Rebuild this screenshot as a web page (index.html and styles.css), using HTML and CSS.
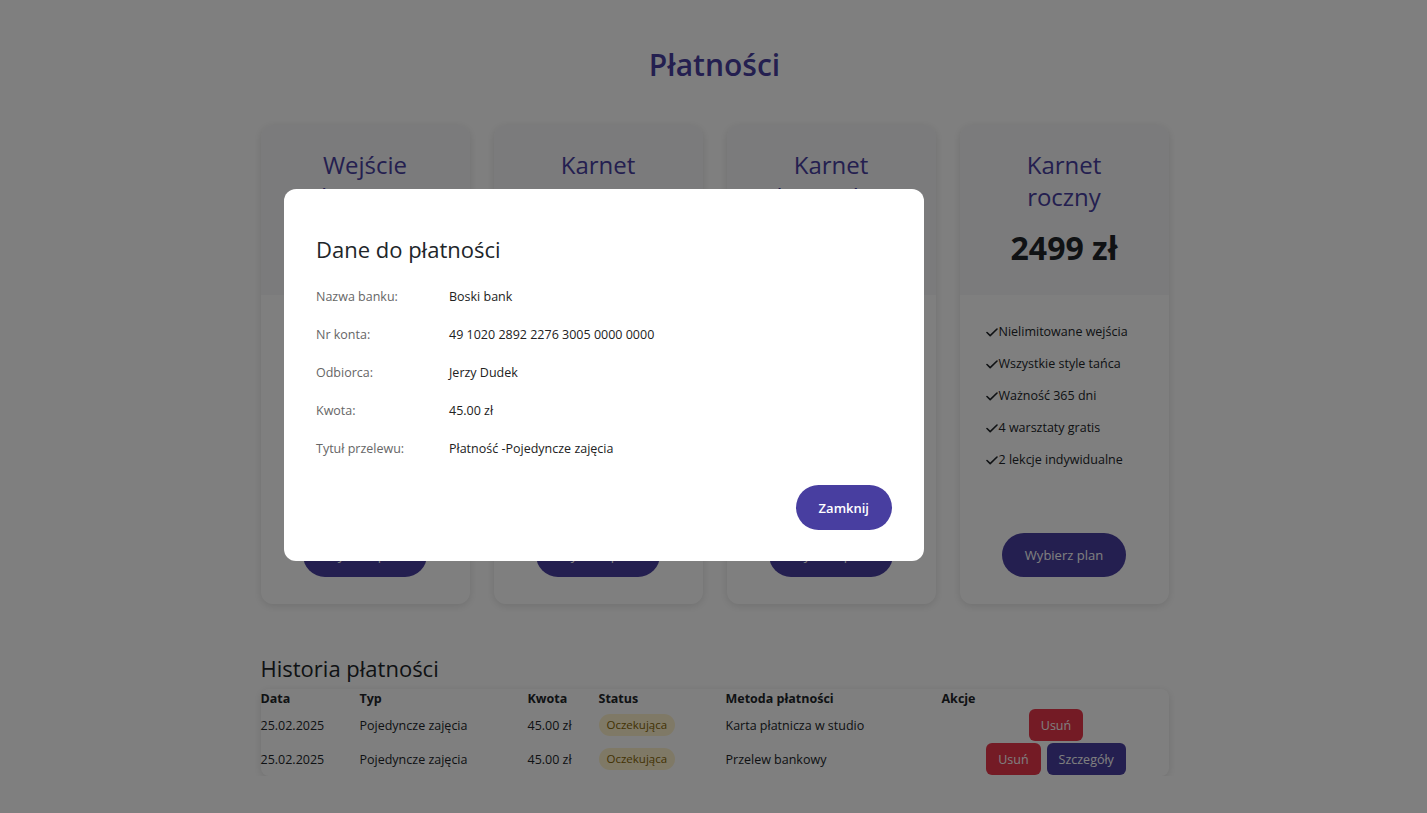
FILE: index.html
```html
<!DOCTYPE html>
<html lang="pl">
<head>
<meta charset="utf-8">
<title>Płatności</title>
<link rel="stylesheet" href="styles.css">
</head>
<body>
<main class="page">
  <h1 class="page-title">Płatności</h1>
  <section class="plans">
    <div class="plan">
      <div class="plan-head">
        <h3 class="plan-name">Wejście jednorazowe</h3>
        <div class="plan-price">45 zł</div>
      </div>
      <div class="plan-body">
        <ul class="features">
          <li><svg class="check" viewBox="0 0 12 9"><polyline points="1,4.5 4.2,7.6 11,1"/></svg>Jedne zajęcia</li>
          <li><svg class="check" viewBox="0 0 12 9"><polyline points="1,4.5 4.2,7.6 11,1"/></svg>Dowolny styl tańca</li>
        </ul>
        <button class="btn-plan">Wybierz plan</button>
      </div>
    </div>
    <div class="plan">
      <div class="plan-head">
        <h3 class="plan-name">Karnet miesięczny</h3>
        <div class="plan-price">249 zł</div>
      </div>
      <div class="plan-body">
        <ul class="features">
          <li><svg class="check" viewBox="0 0 12 9"><polyline points="1,4.5 4.2,7.6 11,1"/></svg>8 wejść</li>
          <li><svg class="check" viewBox="0 0 12 9"><polyline points="1,4.5 4.2,7.6 11,1"/></svg>Wszystkie style tańca</li>
          <li><svg class="check" viewBox="0 0 12 9"><polyline points="1,4.5 4.2,7.6 11,1"/></svg>Ważność 30 dni</li>
        </ul>
        <button class="btn-plan">Wybierz plan</button>
      </div>
    </div>
    <div class="plan">
      <div class="plan-head">
        <h3 class="plan-name">Karnet kwartalny</h3>
        <div class="plan-price">699 zł</div>
      </div>
      <div class="plan-body">
        <ul class="features">
          <li><svg class="check" viewBox="0 0 12 9"><polyline points="1,4.5 4.2,7.6 11,1"/></svg>Nielimitowane wejścia</li>
          <li><svg class="check" viewBox="0 0 12 9"><polyline points="1,4.5 4.2,7.6 11,1"/></svg>Wszystkie style tańca</li>
          <li><svg class="check" viewBox="0 0 12 9"><polyline points="1,4.5 4.2,7.6 11,1"/></svg>Ważność 90 dni</li>
          <li><svg class="check" viewBox="0 0 12 9"><polyline points="1,4.5 4.2,7.6 11,1"/></svg>1 warsztat gratis</li>
        </ul>
        <button class="btn-plan">Wybierz plan</button>
      </div>
    </div>
    <div class="plan">
      <div class="plan-head">
        <h3 class="plan-name">Karnet roczny</h3>
        <div class="plan-price">2499 zł</div>
      </div>
      <div class="plan-body">
        <ul class="features">
          <li><svg class="check" viewBox="0 0 12 9"><polyline points="1,4.5 4.2,7.6 11,1"/></svg>Nielimitowane wejścia</li>
          <li><svg class="check" viewBox="0 0 12 9"><polyline points="1,4.5 4.2,7.6 11,1"/></svg>Wszystkie style tańca</li>
          <li><svg class="check" viewBox="0 0 12 9"><polyline points="1,4.5 4.2,7.6 11,1"/></svg>Ważność 365 dni</li>
          <li><svg class="check" viewBox="0 0 12 9"><polyline points="1,4.5 4.2,7.6 11,1"/></svg>4 warsztaty gratis</li>
          <li><svg class="check" viewBox="0 0 12 9"><polyline points="1,4.5 4.2,7.6 11,1"/></svg>2 lekcje indywidualne</li>
        </ul>
        <button class="btn-plan">Wybierz plan</button>
      </div>
    </div>
  </section>

  <section class="history">
    <h2 class="history-title">Historia płatności</h2>
    <div class="table-card">
      <table class="history-table">
        <colgroup>
          <col class="c-date"><col class="c-type"><col class="c-amount"><col class="c-status"><col class="c-method"><col class="c-actions">
        </colgroup>
        <thead>
          <tr><th>Data</th><th>Typ</th><th>Kwota</th><th>Status</th><th>Metoda płatności</th><th>Akcje</th></tr>
        </thead>
        <tbody>
          <tr>
            <td>25.02.2025</td><td>Pojedyncze zajęcia</td><td>45.00 zł</td>
            <td><span class="badge">Oczekująca</span></td>
            <td>Karta płatnicza w studio</td>
            <td class="actions"><button class="btn-sm btn-danger">Usuń</button></td>
          </tr>
          <tr>
            <td>25.02.2025</td><td>Pojedyncze zajęcia</td><td>45.00 zł</td>
            <td><span class="badge">Oczekująca</span></td>
            <td>Przelew bankowy</td>
            <td class="actions"><button class="btn-sm btn-danger">Usuń</button><button class="btn-sm btn-primary">Szczegóły</button></td>
          </tr>
        </tbody>
      </table>
    </div>
  </section>
</main>

<div class="overlay">
  <div class="modal">
    <h2 class="modal-title">Dane do płatności</h2>
    <dl class="details">
      <div class="row"><dt>Nazwa banku:</dt><dd>Boski bank</dd></div>
      <div class="row"><dt>Nr konta:</dt><dd>49 1020 2892 2276 3005 0000 0000</dd></div>
      <div class="row"><dt>Odbiorca:</dt><dd>Jerzy Dudek</dd></div>
      <div class="row"><dt>Kwota:</dt><dd>45.00 zł</dd></div>
      <div class="row"><dt>Tytuł przelewu:</dt><dd>Płatność -Pojedyncze zajęcia</dd></div>
    </dl>
    <div class="modal-foot">
      <button class="btn-close">Zamknij</button>
    </div>
  </div>
</div>
</body>
</html>
```

FILE: styles.css
```css
* { box-sizing: border-box; }
html, body { margin: 0; padding: 0; }
body {
  background: #ffffff;
  font-family: "Open Sans", "Noto Sans", sans-serif;
  color: #212529;
}
.page {
  width: 910px;
  margin: 0 auto;
  padding-top: 45px;
  padding-left: 2px;
}
.page-title {
  margin: 0 0 40px;
  text-align: center;
  font-size: 30px;
  line-height: 40px;
  font-weight: 600;
  color: #483ea0;
}
.plans {
  display: grid;
  grid-template-columns: repeat(4, 1fr);
  gap: 24px;
}
.plan {
  background: #fff;
  border-radius: 12px;
  box-shadow: 0 2px 8px rgba(0,0,0,0.12);
  display: flex;
  flex-direction: column;
  overflow: hidden;
}
.plan-head {
  background: #f6f6f8;
  padding: 24px 32px 28px;
  text-align: center;
}
.plan-name {
  margin: 0;
  font-size: 24px;
  line-height: 32px;
  font-weight: 500;
  color: #483ea0;
}
.plan-price {
  margin-top: 16px;
  font-size: 32px;
  line-height: 38px;
  font-weight: 700;
  color: #212529;
}
.plan-body {
  flex: 1;
  display: flex;
  flex-direction: column;
  align-items: center;
  padding: 21px 24px 27px;
}
.features {
  list-style: none;
  margin: 0 0 57px;
  padding: 0 0 0 2px;
  align-self: stretch;
}
.features li {
  display: flex;
  align-items: center;
  font-size: 12.5px;
  line-height: 32px;
  color: #212529;
}
.check {
  width: 12px;
  height: 9px;
  margin-right: 1px;
  fill: none;
  stroke: #212529;
  stroke-width: 1.6;
  stroke-linecap: round;
  stroke-linejoin: round;
}
.btn-plan {
  margin-top: auto;
  height: 44px;
  padding: 0 23px;
  border: none;
  border-radius: 22px;
  background: #483ea0;
  color: #fff;
  font-family: inherit;
  font-size: 13px;
}
.history { margin-top: 48px; }
.history-title {
  margin: 0;
  font-size: 22px;
  line-height: 32px;
  font-weight: 500;
  color: #212529;
}
.table-card {
  margin-top: 5px;
  background: #fff;
  border-radius: 8px;
  box-shadow: 0 2px 8px rgba(0,0,0,0.12);
}
.history-table {
  width: 100%;
  border-collapse: collapse;
  table-layout: fixed;
  font-size: 12.5px;
}
.c-date { width: 99px; }
.c-type { width: 168px; }
.c-amount { width: 71px; }
.c-status { width: 127px; }
.c-method { width: 216px; }
.c-actions { width: 229px; }
.history-table th {
  text-align: left;
  font-weight: 700;
  padding: 0;
  height: 19px;
  line-height: 19px;
}
.history-table td {
  padding: 1px 0;
  height: 34px;
  vertical-align: middle;
}
.badge {
  display: inline-block;
  height: 22px;
  line-height: 22px;
  padding: 0 8px;
  border-radius: 11px;
  background: #fff3cd;
  color: #856404;
  font-size: 11.5px;
}
.actions { text-align: center; }
.btn-sm {
  height: 32px;
  padding: 0 12px;
  border: none;
  border-radius: 6px;
  color: #fff;
  font-family: inherit;
  font-size: 12.5px;
  vertical-align: middle;
}
.btn-sm + .btn-sm { margin-left: 6px; }
.btn-danger { background: #e8364b; }
.btn-primary { background: #483ea0; }

.overlay {
  position: fixed;
  inset: 0;
  background: rgba(0,0,0,0.5);
}
.modal {
  position: absolute;
  left: 284px;
  top: 189px;
  width: 640px;
  background: #fff;
  border-radius: 12px;
  padding: 32px 32px 31px;
}
.modal-title {
  margin: 12px 0 13px;
  font-size: 22px;
  line-height: 32px;
  font-weight: 500;
  color: #212529;
}
.details { margin: 0; }
.row {
  display: flex;
  padding: 9px 0;
  line-height: 20px;
  font-size: 12.5px;
}
.row dt {
  width: 133px;
  color: #666;
}
.row dd {
  margin: 0;
  color: #222;
  font-weight: 500;
}
.modal-foot {
  display: flex;
  justify-content: flex-end;
  margin-top: 17px;
}
.btn-close {
  height: 45px;
  padding: 0 23px;
  border: none;
  border-radius: 23px;
  background: #483ea0;
  color: #fff;
  font-family: inherit;
  font-size: 13px;
  font-weight: 600;
}
```
